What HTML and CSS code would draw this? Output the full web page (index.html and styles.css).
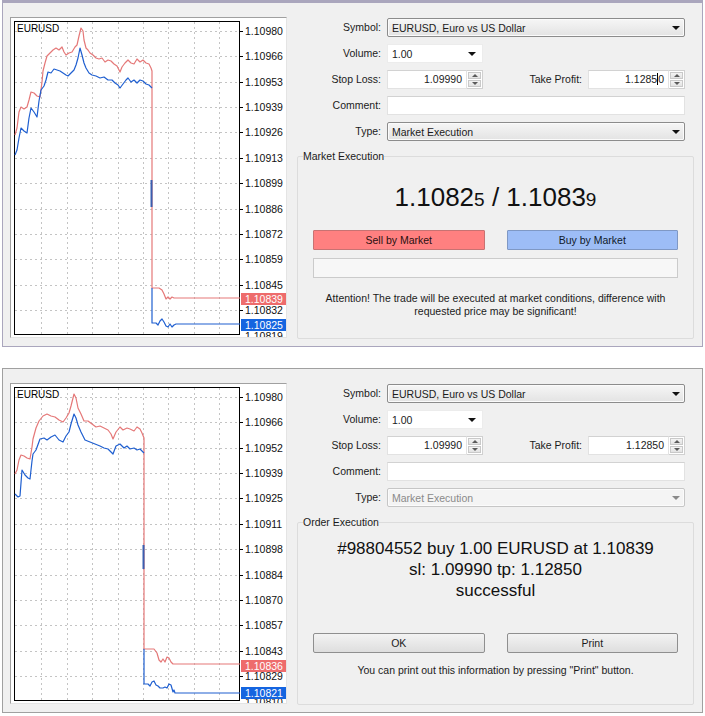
FILE: index.html
```html
<!DOCTYPE html>
<html>
<head>
<meta charset="utf-8">
<title>Order</title>
<link rel="stylesheet" href="styles.css">
</head>
<body>

<div class="window window-top">
  <div class="chart">
    <svg class="plot" width="275" height="319" viewBox="11 18 275 319">
      <path class="grid" d="M41.5 22V335M67.5 22V335M92.5 22V335M118.5 22V335M143.5 22V335M168.5 22V335M194.5 22V335M219.5 22V335M15 31.5H240M15 56.5H240M15 82.5H240M15 107.5H240M15 132.5H240M15 158.5H240M15 183.5H240M15 209.5H240M15 234.5H240M15 259.5H240M15 285.5H240M15 310.5H240"/>
      <rect x="14.5" y="21.5" width="225" height="313" fill="none" stroke="#000"/>
      <path class="ticks" d="M240 31.5h3M240 56.5h3M240 82.5h3M240 107.5h3M240 132.5h3M240 158.5h3M240 183.5h3M240 209.5h3M240 234.5h3M240 259.5h3M240 285.5h3M240 310.5h3"/>
      <polyline class="ask" points="15,135 17,128 19,112 21,107 24,109 27,107 29,100 31,92 34,93 37,96 40,97 42,82 43,71 45,63 47,56 50,53 53,50 56,48 59,50 62,47 64,52 66,55 69,53 72,52 75,47 77,45 79,36 81,28 83,31 84,40 86,48 88,50 90,53 93,55 96,58 99,59 102,58 105,62 108,60 111,61 114,64 117,66 120,72 122,67 125,63 128,60 131,63 134,64 137,59 140,62 143,60 146,63 149,64 151,68 152,71 152,288 159,288 162,290 164,294 166,299 168,297 170,299 172,297 174,298 240,298"/>
      <polyline class="bid" points="15,155 17,150 19,138 21,128 24,131 27,133 29,118 31,108 34,112 37,117 39,101 41,90 44,86 46,80 48,72 51,73 54,69 57,70 60,71 63,73 66,75 68,76 71,73 74,70 76,65 78,58 80,48 82,55 84,63 86,68 89,73 92,75 96,76 100,78 104,77 108,80 112,80 115,83 118,85 120,88 123,84 126,80 128,78 131,82 134,80 137,83 140,80 143,81 146,84 149,85 152,88"/>
      <polyline class="bid" points="152,288 152,323 156,323 158,325 160,321 162,319 164,322 166,326 168,327 170,324 172,327 174,325 176,324 240,324"/>
      <path class="bid-bar" d="M151.5 180V207"/>
      <text class="sym" x="17" y="32">EURUSD</text>
      <g class="ax">
        <text x="245" y="35">1.10980</text>
        <text x="245" y="60">1.10966</text>
        <text x="245" y="86">1.10953</text>
        <text x="245" y="111">1.10939</text>
        <text x="245" y="136">1.10926</text>
        <text x="245" y="162">1.10913</text>
        <text x="245" y="187">1.10899</text>
        <text x="245" y="213">1.10886</text>
        <text x="245" y="238">1.10872</text>
        <text x="245" y="263">1.10859</text>
        <text x="245" y="289">1.10845</text>
        <text x="245" y="314">1.10832</text>
        <text x="245" y="339.5">1.10819</text>
      </g>
      <rect class="ask-tag" x="241" y="293" width="46" height="12"/>
      <text class="tag-text" x="245" y="303">1.10839</text>
      <rect class="bid-tag" x="241" y="319" width="46" height="12"/>
      <text class="tag-text" x="245" y="329">1.10825</text>
    </svg>
  </div>

  <div class="form">
    <div class="fields">
      <div class="lbl">Symbol:</div>
      <div class="combo"><span>EURUSD, Euro vs US Dollar</span><span class="arrow"></span></div>

      <div class="lbl">Volume:</div>
      <div class="row"><div class="edit-combo"><span>1.00</span><span class="arrow"></span></div></div>

      <div class="lbl">Stop Loss:</div>
      <div class="row">
        <div class="spin sl"><span class="spin-input">1.09990</span><span class="spin-btns"><span class="up"></span><span class="down"></span></span></div>
        <div class="lbl tp-lbl">Take Profit:</div>
        <div class="spin tp"><span class="spin-input focus">1.1285<span class="caret"></span>0</span><span class="spin-btns"><span class="up"></span><span class="down"></span></span></div>
      </div>

      <div class="lbl">Comment:</div>
      <div class="text-input"></div>

      <div class="lbl">Type:</div>
      <div class="combo"><span>Market Execution</span><span class="arrow"></span></div>
    </div>

    <fieldset class="group">
      <legend>Market Execution</legend>
      <div class="quote">1.1082<span class="pip">5</span> / 1.1083<span class="pip">9</span></div>
      <div class="btn-row">
        <div class="btn sell">Sell by Market</div>
        <div class="btn buy">Buy by Market</div>
      </div>
      <div class="progress"></div>
      <p class="notice">Attention! The trade will be executed at market conditions, difference with<br>requested price may be significant!</p>
    </fieldset>
  </div>
</div>

<div class="window window-bottom">
  <div class="chart">
    <svg class="plot" width="275" height="319" viewBox="11 18 275 319">
      <path class="grid" d="M41.5 22V335M67.5 22V335M92.5 22V335M118.5 22V335M143.5 22V335M168.5 22V335M194.5 22V335M219.5 22V335M15 31.5H240M15 56.5H240M15 82.5H240M15 107.5H240M15 132.5H240M15 158.5H240M15 183.5H240M15 209.5H240M15 234.5H240M15 259.5H240M15 285.5H240M15 310.5H240"/>
      <rect x="14.5" y="21.5" width="225" height="313" fill="none" stroke="#000"/>
      <path class="ticks" d="M240 31.5h3M240 56.5h3M240 82.5h3M240 107.5h3M240 132.5h3M240 158.5h3M240 183.5h3M240 209.5h3M240 234.5h3M240 259.5h3M240 285.5h3M240 310.5h3"/>
      <polyline class="ask" points="15,108 17,104 19,94 21,89 24,90 27,92 30,93 32,81 33,73 36,62 39,55 43,50 47,48 51,50 55,51 59,54 63,56 66,52 69,47 71,40 74,28 76,32 78,42 81,48 84,55 88,55 92,58 96,61 100,60 104,62 108,64 111,68 113,73 116,66 120,61 123,64 127,62 130,63 134,65 137,61 140,63 142,67 144,72 144,283 154,283 157,287 159,294 161,296 163,293 165,296 167,291 169,292 171,296 173,298 240,298"/>
      <polyline class="bid" points="15,128 18,131 20,130 22,104 25,109 28,112 30,113 32,95 33,88 36,84 40,73 44,72 47,74 51,71 55,69 59,74 63,76 66,70 69,66 71,58 74,48 76,52 78,59 81,66 85,74 90,76 95,78 100,80 104,82 108,83 111,86 113,88 116,80 120,78 124,82 127,80 130,83 134,82 137,84 140,83 143,86 144,87"/>
      <polyline class="bid" points="144,283 144,318 148,318 150,320 152,316 154,315 156,319 158,320 160,322 163,322 165,321 167,322 169,318 171,319 173,326 174,324 175,327 240,327"/>
      <path class="bid-bar" d="M143.5 179V203"/>
      <text class="sym" x="17" y="32">EURUSD</text>
      <g class="ax">
        <text x="245" y="35">1.10980</text>
        <text x="245" y="60">1.10966</text>
        <text x="245" y="86">1.10952</text>
        <text x="245" y="111">1.10939</text>
        <text x="245" y="136">1.10925</text>
        <text x="245" y="162">1.10911</text>
        <text x="245" y="187">1.10898</text>
        <text x="245" y="213">1.10884</text>
        <text x="245" y="238">1.10870</text>
        <text x="245" y="263">1.10857</text>
        <text x="245" y="289">1.10843</text>
        <text x="245" y="314">1.10829</text>
        <text x="245" y="339.5">1.10810</text>
      </g>
      <rect class="ask-tag" x="241" y="294" width="46" height="12"/>
      <text class="tag-text" x="245" y="304">1.10836</text>
      <rect class="bid-tag" x="241" y="321" width="46" height="12"/>
      <text class="tag-text" x="245" y="331">1.10821</text>
    </svg>
  </div>

  <div class="form">
    <div class="fields">
      <div class="lbl">Symbol:</div>
      <div class="combo"><span>EURUSD, Euro vs US Dollar</span><span class="arrow"></span></div>

      <div class="lbl">Volume:</div>
      <div class="row"><div class="edit-combo"><span>1.00</span><span class="arrow"></span></div></div>

      <div class="lbl">Stop Loss:</div>
      <div class="row">
        <div class="spin sl"><span class="spin-input">1.09990</span><span class="spin-btns"><span class="up"></span><span class="down"></span></span></div>
        <div class="lbl tp-lbl">Take Profit:</div>
        <div class="spin tp"><span class="spin-input">1.12850</span><span class="spin-btns"><span class="up"></span><span class="down"></span></span></div>
      </div>

      <div class="lbl">Comment:</div>
      <div class="text-input"></div>

      <div class="lbl">Type:</div>
      <div class="combo disabled"><span>Market Execution</span><span class="arrow"></span></div>
    </div>

    <fieldset class="group">
      <legend>Order Execution</legend>
      <p class="result">#98804552 buy 1.00 EURUSD at 1.10839<br>sl: 1.09990 tp: 1.12850<br>successful</p>
      <div class="btn-row gap-big">
        <div class="btn plain">OK</div>
        <div class="btn plain">Print</div>
      </div>
      <p class="notice notice-print">You can print out this information by pressing "Print" button.</p>
    </fieldset>
  </div>
</div>

</body>
</html>
```

FILE: styles.css
```css
* { box-sizing: border-box; }

html, body {
  margin: 0;
  padding: 0;
  background: #fff;
}

body {
  width: 705px;
  height: 716px;
  overflow: hidden;
  font-family: "Liberation Sans", Arial, sans-serif;
  font-size: 10.5px;
  color: #1b1b1b;
}

.window {
  margin-left: 2px;
  width: 701px;
  height: 347px;
  display: flex;
  gap: 10px;
  padding: 14px 8px 0 7px;
  background: #f0f0f0;
  border: 1px solid #a5a5a5;
}

.window-top {
  border-color: #aaa6bd;
  border-top-width: 3px;
}

.window-bottom {
  margin-top: 21px;
  height: 345px;
  border-color: #a0a0a0;
}

/* chart */
.chart {
  flex: none;
  width: 277px;
  height: 321px;
  background: #fff;
  border: 1px solid;
  border-color: #a0a0a0 #e4e4e4 #e4e4e4 #a0a0a0;
}

.plot { display: block; }

.grid {
  fill: none;
  stroke: #c4c4c4;
  stroke-width: 1;
  stroke-dasharray: 2 3;
}

.ticks { stroke: #000; stroke-width: 1; }

.ask, .bid {
  fill: none;
  stroke-width: 1.2;
  stroke-linejoin: round;
}
.ask { stroke: #e57878; }
.bid { stroke: #1f5fd0; }
.bid-bar { stroke: #3a5fb0; stroke-width: 2; }

.sym {
  font-family: "Liberation Sans", Arial, sans-serif;
  font-size: 10px;
  fill: #000;
}

.ax text, .tag-text {
  font-family: "Liberation Sans", Arial, sans-serif;
  font-size: 10.5px;
}
.ax text { fill: #111; }
.tag-text { fill: #fff; }
.ask-tag { fill: #ee6c6c; }
.bid-tag { fill: #1565e0; }

/* form */
.form {
  flex: none;
  width: 397px;
  padding-top: 1px;
}

.fields {
  display: grid;
  grid-template-columns: 84px 298px;
  grid-auto-rows: 19px;
  column-gap: 6px;
  row-gap: 7px;
}

.lbl {
  text-align: right;
  line-height: 19px;
  white-space: nowrap;
}

.row {
  display: flex;
  align-items: stretch;
}

.arrow {
  width: 0;
  height: 0;
  border-left: 4px solid transparent;
  border-right: 4px solid transparent;
  border-top: 4px solid #111;
}

.combo {
  display: flex;
  align-items: center;
  justify-content: space-between;
  padding: 0 4px 0 4px;
  border: 1px solid #8c8c8c;
  border-radius: 2px;
  background: linear-gradient(#f6f6f6, #e3e3e3);
  box-shadow: inset 0 0 0 1px #fbfbfb;
}

.combo.disabled {
  color: #8a8a8a;
  border-color: #c6c6c6;
  background: #f4f4f4;
}
.combo.disabled .arrow { border-top-color: #8a8a8a; }

.edit-combo {
  width: 96px;
  display: flex;
  align-items: center;
  justify-content: space-between;
  padding: 0 6px 0 4px;
  background: #fff;
  border: 1px solid #ececec;
}

.spin {
  display: flex;
}
.spin.sl { width: 96px; }
.spin.tp { width: 97px; }

.spin-input {
  flex: 1;
  text-align: right;
  line-height: 17px;
  padding-right: 4px;
  background: #fff;
  border: 1px solid #e2e2e2;
  border-top-color: #d2d2d2;
}

.caret {
  display: inline-block;
  width: 1px;
  height: 12px;
  margin: 0 0 -2px;
  background: #000;
}

.spin-btns {
  width: 16px;
  display: flex;
  flex-direction: column;
  border: 1px solid #d0d0d0;
  border-left: none;
  background: #fff;
  padding: 1px;
  gap: 1px;
}
.spin-btns span {
  flex: 1;
  display: flex;
  align-items: center;
  justify-content: center;
  background: linear-gradient(#f4f4f4, #e2e2e2);
  border: 1px solid #c9c9c9;
}
.spin-btns .up::before,
.spin-btns .down::before {
  content: "";
  border-left: 3px solid transparent;
  border-right: 3px solid transparent;
}
.spin-btns .up::before { border-bottom: 3px solid #5a5a5a; }
.spin-btns .down::before { border-top: 3px solid #5a5a5a; }

.tp-lbl {
  flex: 1;
  padding-right: 6px;
}

.text-input {
  background: #fff;
  border: 1px solid #e2e2e2;
  border-top-color: #d2d2d2;
}

/* group box */
.group {
  margin: 9px 0 0;
  height: 189px;
  padding: 0 15px;
  border: 1px solid #dcdcdc;
  border-radius: 2px;
  min-width: 0;
}

.group legend {
  padding: 0;
  margin-left: -10px;
  line-height: 13px;
}

.quote {
  margin-top: 19px;
  text-align: center;
  font-size: 26px;
  line-height: 30px;
  color: #111;
}
.quote .pip { font-size: 19px; }

.btn-row {
  display: flex;
  gap: 22px;
  margin-top: 15px;
}
.btn-row.gap-big { margin-top: 32px; }

.btn {
  flex: 1;
  height: 20px;
  line-height: 18px;
  text-align: center;
  border: 1px solid;
  border-radius: 1px;
}
.sell {
  background: #ff8080;
  border-color: #c87272;
  color: #2a1010;
}
.buy {
  background: #9dbdf6;
  border-color: #7f98c4;
  color: #101a2a;
}
.plain {
  background: linear-gradient(#f3f3f3, #dedede);
  border-color: #8f8f8f;
  border-radius: 2px;
}

.progress {
  margin-top: 8px;
  height: 20px;
  background: #f7f7f7;
  border: 1px solid #cbcbcb;
}

.notice {
  margin: 14px 0 0;
  text-align: center;
  line-height: 13px;
}
.notice-print { margin-top: 11px; }

.result {
  margin: 9px 0 0;
  text-align: center;
  font-size: 17px;
  line-height: 21px;
  color: #111;
}
```
